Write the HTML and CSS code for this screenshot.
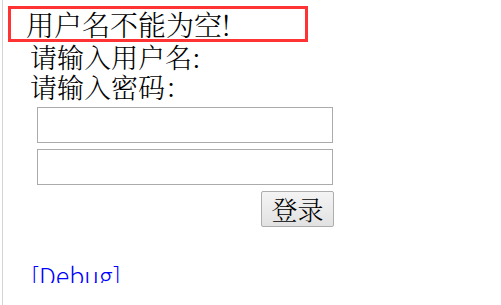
FILE: index.html
```html
<!DOCTYPE html>
<html lang="zh-CN">
<head>
<meta charset="utf-8">
<title>登录</title>
<link rel="stylesheet" href="styles.css">
</head>
<body>
<div class="page">
  <div class="clip">
    <div class="error">用户名不能为空!</div>
    <div class="label">请输入用户名:</div>
    <div class="label">请输入密码：</div>
    <div class="form">
      <input class="field" type="text">
      <input class="field" type="password">
      <div class="actions"><button class="btn" type="button">登录</button></div>
    </div>
    <a class="debug" href="#">[Debug]</a>
  </div>
</div>
</body>
</html>
```
FILE: styles.css
```css
html, body {
  margin: 0;
  padding: 0;
  background: #fff;
}
body {
  font-family: "Noto Serif CJK SC", "Noto Sans CJK SC", serif;
  font-weight: 300;
  color: #000;
}
.page {
  margin-left: 2px;
  border-left: 1px solid #d4d4d4;
  height: 305px;
  box-sizing: border-box;
}
.clip {
  height: 283px;
  overflow: hidden;
  display: flex;
  flex-direction: column;
  align-items: flex-start;
}
.error {
  margin: 6px 0 0 5px;
  width: 300px;
  height: 36px;
  box-sizing: border-box;
  border: 3px solid #f33;
  padding-left: 15px;
  font-size: 28px;
  line-height: 30px;
}
.label {
  margin-left: 27px;
  font-size: 27px;
  line-height: 30px;
  white-space: nowrap;
}
.form {
  margin: 5px 0 0 34px;
  width: 297px;
  display: flex;
  flex-direction: column;
  gap: 6px;
}
.field {
  width: 296px;
  height: 36px;
  box-sizing: border-box;
  margin: 0;
  border: 1px solid #ababab;
  background: #fff;
  padding: 0 4px;
}
.actions {
  display: flex;
  justify-content: flex-end;
}
.btn {
  width: 73px;
  height: 36px;
  box-sizing: border-box;
  margin: 0;
  padding: 0;
  border: 1px solid #adadad;
  border-radius: 2px;
  background: linear-gradient(#f4f4f4, #e2e2e2);
  font-family: inherit;
  font-weight: 300;
  font-size: 26px;
  line-height: 34px;
  color: #000;
}
.debug {
  margin: 33px 0 0 28px;
  font-family: "Noto Sans CJK SC", "DejaVu Sans", sans-serif;
  font-weight: 300;
  font-size: 25px;
  line-height: 30px;
  color: #00f;
  text-decoration: none;
}
```
